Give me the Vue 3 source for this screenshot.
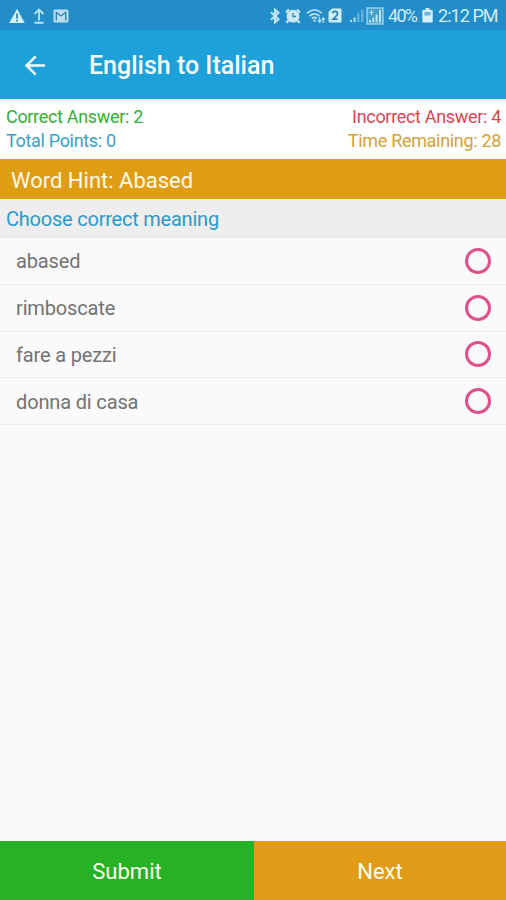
<script setup>
import { ref } from 'vue'

const options = ['abased', 'rimboscate', 'fare a pezzi', 'donna di casa']
const selected = ref(null)
</script>

<template>
  <main class="screen">
    <header class="status">
      <svg class="warn" width="16" height="16" viewBox="0 0 16 16">
        <path d="M8 .8 15.7 15H.3Z" fill="#d3eff9" />
        <path d="M8 5.5v5M8 11.8v1.8" stroke="#3f8fbd" stroke-width="2" />
      </svg>
      <svg class="upload" width="12" height="16" viewBox="0 0 12 16" fill="none" stroke="#b9e2f3" stroke-width="1.9">
        <path d="M6 12.5V2M1.5 6 6 1.6 10.500 6M1.500 14.700h9" />
      </svg>
      <svg class="mail" width="16" height="14" viewBox="0 0 16 14">
        <rect x=".5" y=".5" width="15" height="13" rx="1.500" fill="#b9dff0" />
        <path d="M3.300 11.500V3.500L8 7l4.700-3.500v8" fill="none" stroke="#2e83b5" stroke-width="1.400" />
      </svg>
      <span class="spacer"></span>
      <svg class="bluetooth" width="12" height="16" viewBox="0 0 12 16" fill="none" stroke="#c6e8f6" stroke-width="2">
        <path d="M2 4.300 9.500 11.300 6 14.500v-13l3.500 3.200L2 11.700" />
      </svg>
      <svg class="alarm" width="16" height="16" viewBox="0 0 16 16">
        <circle cx="8" cy="8.200" r="6.400" fill="#cbeaf7" />
        <path d="M1 4.500 4 1.500M15 4.500l-3-3M3.500 12.500l-2 2.200M12.500 12.500l2 2.200" stroke="#cbeaf7" stroke-width="2.200" />
        <path d="M8 5v3.500h3" fill="none" stroke="#2b86b9" stroke-width="1.300" />
      </svg>
      <svg class="wifi" width="20" height="16" viewBox="0 0 20 16" fill="none" stroke="#b4def1" stroke-width="1.800">
        <path d="M1 5.200Q8.500-1.500 16 5.200M3.500 8q5-4.200 10 0M6 10.500q2.500-2 5 0" />
        <circle cx="8.500" cy="12.700" r="1.200" fill="#b4def1" stroke="none" />
        <path d="M13.500 9v5M11.800 12.300l1.700 1.900 1.700-1.900M17.300 15v-5M15.800 11.800l1.500-1.900 1.500 1.900" stroke-width="1.300" />
      </svg>
      <svg class="sim" width="14" height="15" viewBox="0 0 14 15">
        <path d="M4 .5h8.500q1 0 1 1v12q0 1-1 1h-11q-1 0-1-1V4Z" fill="#d0edf9" />
        <path d="M4.500 5.300Q5 3.400 7.100 3.400q2.400 0 2.400 2 0 1.300-1.500 2.800l-3 3h4.800" fill="none" stroke="#2380b6" stroke-width="1.600" />
      </svg>
      <svg class="signal" width="15" height="15" viewBox="0 0 15 15">
        <path d="M1 12h2v2H1ZM4.500 9.500h2V14h-2Z" fill="#b5dff1" />
        <path d="M8 5.500h2.500V14H8ZM12 1.500h2.500V14H12Z" fill="#65afd7" />
      </svg>
      <svg class="signal-boxed" width="18" height="18" viewBox="0 0 18 18">
        <rect x="1" y="1" width="16" height="16" fill="#479fcc" stroke="#a6d7ed" stroke-width="1.300" />
        <path d="M3 13h2v2.500H3ZM6.300 10.500h2v5h-2ZM9.600 7.500h2v8h-2ZM13 3h2v12.500h-2Z" fill="#b9e1f2" />
        <path d="M5.500 3v5M3.500 5.500h4" stroke="#b9e1f2" stroke-width="1.200" />
      </svg>
      <span class="percent">40%</span>
      <svg class="battery" width="11" height="15" viewBox="0 0 11 15">
        <path d="M3.500 0h4v2H10q.7 0 .7.700v11q0 .8-.7.800H1q-.7 0-.7-.8v-11Q.3 2 1 2h2.500Z" fill="#d6f0fa" />
        <path d="M2.300 4h6.400v3.500H2.300Z" fill="#6eb3d8" />
      </svg>
      <span class="time">2:12 PM</span>
    </header>

    <nav class="toolbar">
      <button class="back" aria-label="Back">
        <svg width="22" height="22" viewBox="0 0 22 22" fill="none" stroke="#f2fcff" stroke-width="2.500">
          <path d="M21 10.500H3M11.700 1.300 2.500 10.500l9.200 9.200" />
        </svg>
      </button>
      <h1>English to Italian</h1>
    </nav>

    <section class="stats">
      <div class="line">
        <span class="correct">Correct Answer: 2</span>
        <span class="incorrect">Incorrect Answer: 4</span>
      </div>
      <div class="line">
        <span class="points">Total Points: 0</span>
        <span class="remaining">Time Remaining: 28</span>
      </div>
    </section>

    <h2 class="hint">Word Hint: Abased</h2>
    <p class="prompt">Choose correct meaning</p>

    <ul class="options">
      <li v-for="option in options" :key="option">
        <label>
          <span>{{ option }}</span>
          <input v-model="selected" type="radio" name="meaning" :value="option" />
        </label>
      </li>
    </ul>

    <footer class="actions">
      <button class="submit">Submit</button>
      <button class="next">Next</button>
    </footer>
  </main>
</template>

<style>
body {
  margin: 0;
}
</style>

<style scoped>
.screen {
  display: flex;
  flex-direction: column;
  height: 900px;
  background: #fafafa;
  font-family: Roboto, sans-serif;
  overflow: hidden;
}
.status {
  display: flex;
  align-items: center;
  box-sizing: border-box;
  height: 30px;
  padding: 1px 9px 0;
  background: #228dc8;
  color: #d0edf9;
  font-size: 18px;
  line-height: 30px;
  white-space: nowrap;
}
.status svg,
.status span {
  flex-shrink: 0;
}
.status .spacer {
  flex: 1;
}
.upload {
  margin-left: 8px;
}
.mail {
  margin-left: 8px;
}
.alarm {
  margin-left: 4px;
}
.wifi {
  margin-left: 5px;
}
.sim {
  margin-left: 2px;
}
.signal {
  margin-left: 7px;
}
.signal-boxed {
  margin-left: 2px;
}
.percent {
  width: 30px;
  margin-left: 4px;
  letter-spacing: -1.7px;
}
.battery {
  margin-left: 4px;
}
.time {
  width: 59px;
  margin-left: 5px;
  letter-spacing: -0.95px;
}
.toolbar {
  display: flex;
  align-items: center;
  box-sizing: border-box;
  height: 69px;
  padding: 3px 24px 0;
  background: #1da1db;
  color: #f5fdff;
}
button {
  padding: 0;
  border: 0;
  font: inherit;
}
.back {
  display: flex;
  width: 65px;
  background: none;
}
h1 {
  margin: 0;
  font-size: 25px;
  font-weight: 500;
  line-height: 30px;
}
.stats {
  box-sizing: border-box;
  height: 60px;
  padding: 6px 5px 6px 6px;
  background: linear-gradient(#e3e9ec, #fff 4px);
  font-size: 18px;
  letter-spacing: -0.32px;
  line-height: 24px;
}
.line {
  display: flex;
  justify-content: space-between;
}
.correct {
  color: #36ad36;
}
.incorrect {
  color: #d64655;
}
.points {
  color: #3b9fc9;
}
.remaining {
  color: #d3a23b;
}
.hint {
  box-sizing: border-box;
  height: 40px;
  margin: 0;
  padding: 2px 11px 0;
  background: #df9c15;
  color: #fff9e9;
  font-size: 22px;
  font-weight: 400;
  line-height: 40px;
}
.prompt {
  box-sizing: border-box;
  height: 39px;
  margin: 0;
  padding: 0 6px;
  border-bottom: 1px solid #e5e5e5;
  background: #eee;
  color: #2c9aca;
  font-size: 20px;
  letter-spacing: -0.22px;
  line-height: 40px;
}
.options {
  flex: 1;
  margin: 0;
  padding: 0;
  list-style: none;
}
.options li {
  box-sizing: border-box;
  height: 46.8px;
  border-bottom: 1px solid #ebebeb;
}
label {
  display: flex;
  align-items: center;
  justify-content: space-between;
  height: 100%;
  padding: 0 15px;
  color: #737373;
  font-size: 20px;
  letter-spacing: -0.15px;
}
label span {
  padding: 1px 0 0 1px;
}
input {
  appearance: none;
  box-sizing: border-box;
  width: 26px;
  height: 26px;
  margin: 0;
  border: 3px solid #e0508a;
  border-radius: 50%;
}
input:checked {
  background: radial-gradient(#e0508a 6px, transparent 7px);
}
.actions {
  display: flex;
  height: 59px;
  color: #fafff5;
  font-size: 22px;
}
.submit,
.next {
  padding-top: 2px;
  color: inherit;
}
.submit {
  width: 254px;
  background: #27b225;
}
.next {
  flex: 1;
  background: #e09c16;
}
</style>
